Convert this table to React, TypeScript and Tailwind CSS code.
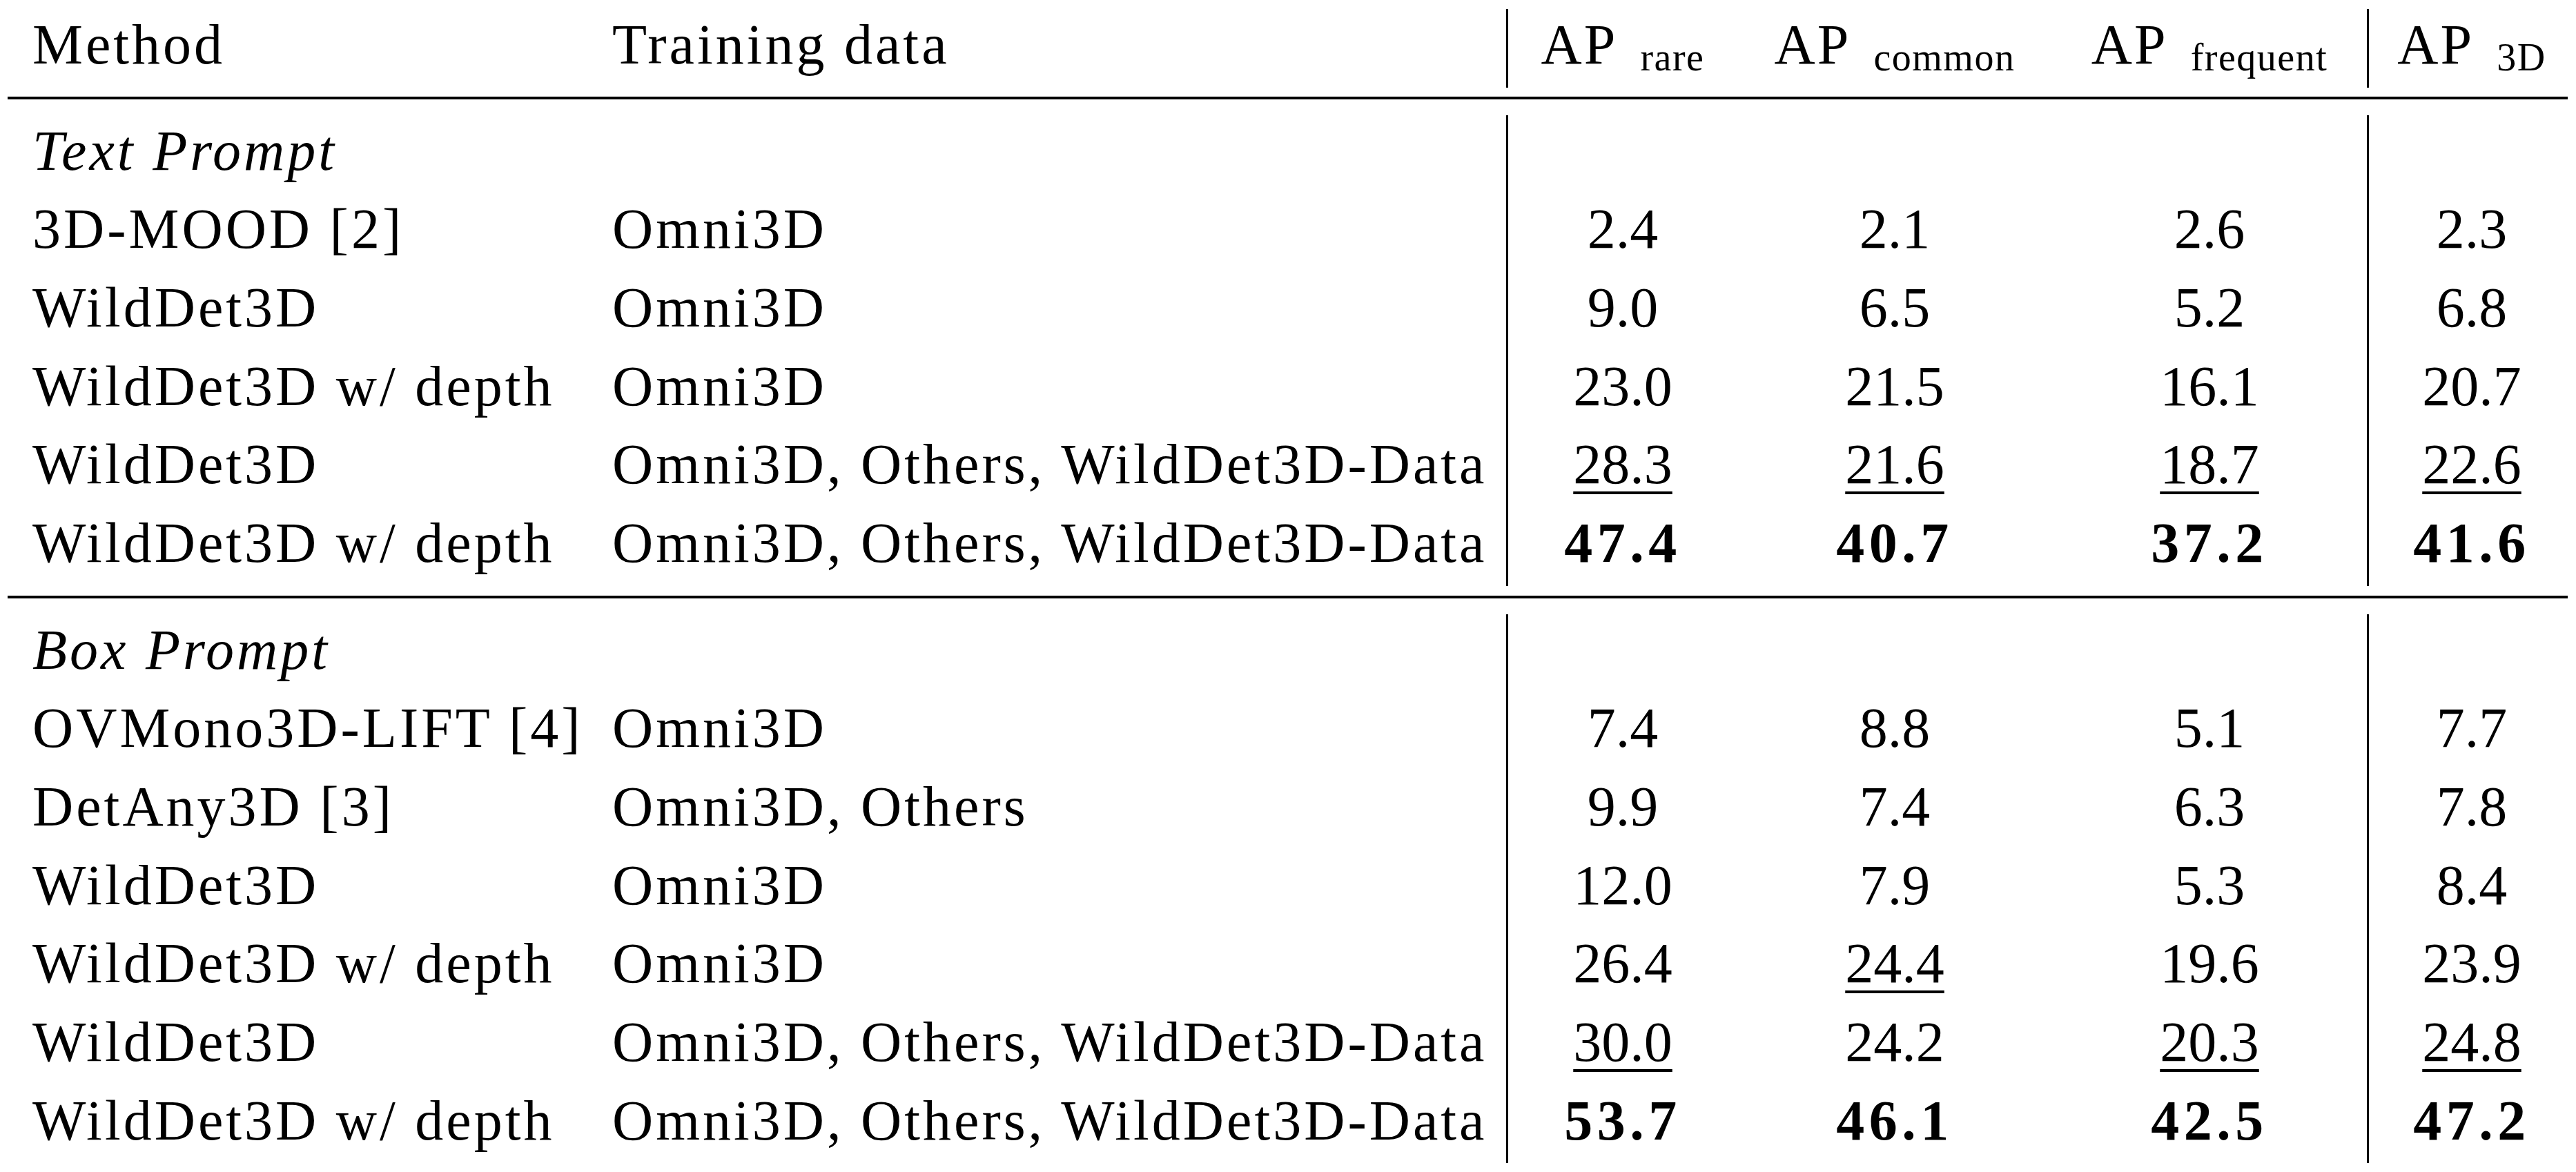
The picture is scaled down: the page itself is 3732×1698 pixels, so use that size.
import * as React from "react";

type Score = { v: string; s?: "b" | "u" };

interface RowData {
  method: string;
  data: string;
  scores: Score[];
}

const n = (v: string): Score => ({ v });
const u = (v: string): Score => ({ v, s: "u" });
const b = (v: string): Score => ({ v, s: "b" });

const ALL = "Omni3D, Others, WildDet3D-Data";

const sections: { title: string; rows: RowData[] }[] = [
  {
    title: "Text Prompt",
    rows: [
      { method: "3D-MOOD [2]", data: "Omni3D", scores: [n("2.4"), n("2.1"), n("2.6"), n("2.3")] },
      { method: "WildDet3D", data: "Omni3D", scores: [n("9.0"), n("6.5"), n("5.2"), n("6.8")] },
      { method: "WildDet3D w/ depth", data: "Omni3D", scores: [n("23.0"), n("21.5"), n("16.1"), n("20.7")] },
      { method: "WildDet3D", data: ALL, scores: [u("28.3"), u("21.6"), u("18.7"), u("22.6")] },
      { method: "WildDet3D w/ depth", data: ALL, scores: [b("47.4"), b("40.7"), b("37.2"), b("41.6")] },
    ],
  },
  {
    title: "Box Prompt",
    rows: [
      { method: "OVMono3D-LIFT [4]", data: "Omni3D", scores: [n("7.4"), n("8.8"), n("5.1"), n("7.7")] },
      { method: "DetAny3D [3]", data: "Omni3D, Others", scores: [n("9.9"), n("7.4"), n("6.3"), n("7.8")] },
      { method: "WildDet3D", data: "Omni3D", scores: [n("12.0"), n("7.9"), n("5.3"), n("8.4")] },
      { method: "WildDet3D w/ depth", data: "Omni3D", scores: [n("26.4"), u("24.4"), n("19.6"), n("23.9")] },
      { method: "WildDet3D", data: ALL, scores: [u("30.0"), n("24.2"), u("20.3"), u("24.8")] },
      { method: "WildDet3D w/ depth", data: ALL, scores: [b("53.7"), b("46.1"), b("42.5"), b("47.2")] },
    ],
  },
];

// widths of the four score columns (vertical line sits before 1st and 4th)
const scoreCols = ["w-[332px]", "w-[456px]", "w-[456px]", "w-[298px]"];

const VLine = () => <div className="w-[3px] shrink-0 bg-black" />;

const Rule = ({ className }: { className: string }) => (
  <div className={`h-[4px] w-[3709px] bg-black ${className}`} />
);

function ScoreText({ score }: { score: Score }) {
  if (score.s === "b") {
    return <span className="font-bold tracking-[6.5px]">{score.v}</span>;
  }
  if (score.s === "u") {
    return (
      <span className="underline decoration-[3.5px] underline-offset-[12px]">{score.v}</span>
    );
  }
  return <span>{score.v}</span>;
}

function Row({
  method,
  data,
  cells,
}: {
  method: React.ReactNode;
  data?: React.ReactNode;
  cells: React.ReactNode[];
}) {
  return (
    <div className="flex h-[113.67px] leading-[104px]">
      <div className="w-[876px] shrink-0 whitespace-nowrap pl-[36px] tracking-[4px]">{method}</div>
      <div className="w-[1295px] shrink-0 whitespace-nowrap tracking-[4px]">{data}</div>
      <VLine />
      <div className={`${scoreCols[0]} shrink-0 text-center whitespace-nowrap`}>{cells[0]}</div>
      <div className={`${scoreCols[1]} shrink-0 text-center whitespace-nowrap`}>{cells[1]}</div>
      <div className={`${scoreCols[2]} shrink-0 text-center whitespace-nowrap`}>{cells[2]}</div>
      <VLine />
      <div className={`${scoreCols[3]} shrink-0 text-center whitespace-nowrap`}>{cells[3]}</div>
    </div>
  );
}

function ApHead({ sub }: { sub: string }) {
  return (
    <span className="whitespace-nowrap">
      <span className="tracking-[3px]">AP</span>
      <span className="ml-[33px] align-[-10px] text-[56px] leading-none tracking-[1.5px]">{sub}</span>
    </span>
  );
}

export default function App() {
  return (
    <div className="h-[1698px] w-[3732px] overflow-hidden bg-white pl-[11px] pt-[13px] font-['Liberation_Serif',serif] text-[82px] text-black">
      <div className="w-[3719px]">
        <Row
          method="Method"
          data="Training data"
          cells={[
            <ApHead key="r" sub="rare" />,
            <ApHead key="c" sub="common" />,
            <ApHead key="f" sub="frequent" />,
            <ApHead key="d" sub="3D" />,
          ]}
        />
        <Rule className="mt-[13px]" />

        {sections.map((sec, i) => (
          <React.Fragment key={sec.title}>
            {i > 0 && <Rule className="mt-[14px]" />}
            <div className="mt-[23px]">
              <Row method={<span className="italic">{sec.title}</span>} cells={[null, null, null, null]} />
              {sec.rows.map((r, j) => (
                <Row
                  key={j}
                  method={r.method}
                  data={r.data}
                  cells={r.scores.map((s, k) => (
                    <ScoreText key={k} score={s} />
                  ))}
                />
              ))}
            </div>
          </React.Fragment>
        ))}
      </div>
    </div>
  );
}
